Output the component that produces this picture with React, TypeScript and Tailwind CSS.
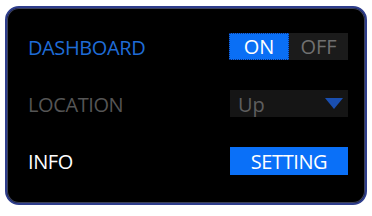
import React from "react";

export default function App() {
  const font = { fontFamily: '"Open Sans", "Noto Sans", sans-serif' };
  return (
    <div className="w-[372px] h-[216px] bg-white overflow-hidden" style={font}>
      <div className="ml-[5px] mt-[6px] w-[362px] h-[199px] rounded-[14px] border-[2.5px] border-[#2e3d8c] bg-black shadow-[inset_0_0_0_1px_#3b4058] pt-[25px] pl-[21px] pr-[17px] flex flex-col gap-[30px]">
        <div className="flex items-center justify-between h-[27px]">
          <span className="text-[20px] leading-none text-[#1f6cd6] tracking-[-0.4px] pt-[2px]">DASHBOARD</span>
          <div className="flex w-[119px] h-[27px]">
            <div className="w-[60px] h-full bg-[#0a6ff5] border border-dotted border-[#0a2f7a] flex items-center justify-center text-[20px] leading-none text-white pt-[1px]">
              ON
            </div>
            <div className="flex-1 h-full bg-[#1b1b1b] flex items-center justify-center text-[20px] leading-none text-[#707070] pt-[1px]">
              OFF
            </div>
          </div>
        </div>
        <div className="flex items-center justify-between h-[27px]">
          <span className="text-[20px] leading-none text-[#555555] tracking-[-0.4px] pt-[2px]">LOCATION</span>
          <div className="w-[118px] h-[27px] bg-[#151515] flex items-center justify-between pl-[8px] pr-[5px]">
            <span className="text-[20px] leading-none text-[#5e5e5e] pt-[2px]">Up</span>
            <svg width="18" height="12" viewBox="0 0 18 12">
              <polygon points="0,0 18,0 9,11" fill="#1a4fb0" />
            </svg>
          </div>
        </div>
        <div className="flex items-center justify-between h-[28px]">
          <span className="text-[20px] leading-none text-white tracking-[-0.4px] pt-[2px]">INFO</span>
          <div className="w-[118px] h-[28px] bg-[#0a70f8] flex items-center justify-center text-[20px] leading-none text-white tracking-[-0.4px] pt-[1px]">
            SETTING
          </div>
        </div>
      </div>
    </div>
  );
}
